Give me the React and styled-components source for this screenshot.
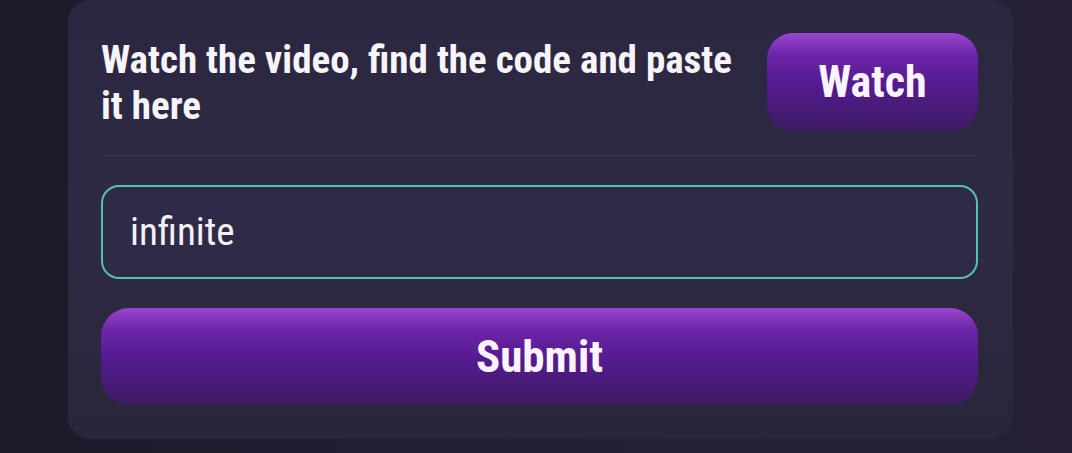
import React from 'react';
import styled, { createGlobalStyle } from 'styled-components';

const GlobalStyle = createGlobalStyle`
  html, body {
    margin: 0;
    padding: 0;
    background: linear-gradient(90deg, #1c1b2a 0%, #221f33 50%, #261f36 100%);
    height: 100%;
  }
  #root {
    height: 453px;
  }
`;

const condensed = `"Roboto Condensed", "Liberation Sans Narrow", Roboto, sans-serif`;

const Page = styled.div`
  width: 1072px;
  height: 453px;
  padding: 0 59px 0 68px;
  box-sizing: border-box;
`;

const Card = styled.div`
  width: 945px;
  height: 439px;
  box-sizing: border-box;
  padding: 33px 35px 34px 33px;
  border-radius: 22px;
  background: linear-gradient(180deg, #2b2740 0%, #2e2a44 50%, #29263b 100%);
  display: flex;
  flex-direction: column;
`;

const Header = styled.div`
  display: flex;
  justify-content: space-between;
  align-items: flex-start;
  padding-bottom: 24px;
  border-bottom: 1px solid #3b3751;
`;

const Prompt = styled.div`
  font-family: ${condensed};
  font-weight: 700;
  font-size: 39px;
  line-height: 46px;
  color: #f7f5fa;
  width: 645px;
  margin-top: 4px;
`;

const GradientButton = styled.button`
  border: none;
  cursor: pointer;
  font-family: ${condensed};
  font-weight: 700;
  color: #fbf3ff;
  background: linear-gradient(180deg, #9a46cf 0%, #6c25a8 22%, #561b92 50%, #3c1b62 100%);
  width: ${p => p.$width || '100%'};
  height: ${p => p.$height}px;
  border-radius: ${p => p.$radius}px;
  font-size: ${p => p.$size}px;
  padding: 0;
`;

const CodeInput = styled.input`
  margin-top: 29px;
  height: 95px;
  box-sizing: border-box;
  border: 2px solid #52c1ae;
  border-radius: 18px;
  background: #2f2b46;
  color: #f3f1f7;
  font-family: ${condensed};
  font-weight: 400;
  font-size: 39px;
  padding: 0 27px;
  outline: none;
`;

const SubmitRow = styled.div`
  margin-top: 29px;
  display: flex;
`;

export default function App() {
  return (
    <>
      <GlobalStyle />
      <Page>
        <Card>
          <Header>
            <Prompt>Watch the video, find the code and paste it here</Prompt>
            <GradientButton $width="211px" $height={98} $radius={26} $size={44}>
              Watch
            </GradientButton>
          </Header>
          <CodeInput defaultValue="infinite" />
          <SubmitRow>
            <GradientButton $height={97} $radius={28} $size={45}>
              Submit
            </GradientButton>
          </SubmitRow>
        </Card>
      </Page>
    </>
  );
}
